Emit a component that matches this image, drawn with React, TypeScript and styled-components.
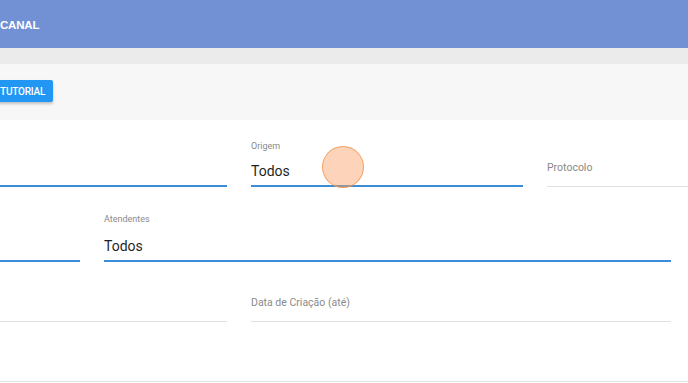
import styled, {createGlobalStyle} from 'styled-components';

const GlobalStyle = createGlobalStyle`
  html, body {
    margin: 0;
    padding: 0;
    background: #ffffff;
    overflow: hidden;
  }
  body {
    font-family: Roboto, "Liberation Sans", Arial, sans-serif;
  }
`;

const Page = styled.div`
  position: relative;
  width: 688px;
  height: 383px;
  overflow: hidden;
  background: #ffffff;
`;

const Header = styled.header`
  height: 48px;
  background: #7290d4;
  display: flex;
  align-items: center;
  padding-top: 1px;
  box-sizing: border-box;
`;

const Title = styled.h1`
  margin: 0;
  color: #ffffff;
  font-size: 11.5px;
  font-weight: 700;
  letter-spacing: -0.2px;
  font-family: "Liberation Sans", Arial, sans-serif;
`;

const Band = styled.div`
  height: 16px;
  background: #ebebeb;
`;

const Toolbar = styled.div`
  height: 56px;
  background: #f7f7f7;
  display: flex;
  align-items: flex-start;
  padding-top: 16px;
  box-sizing: border-box;
`;

const Button = styled.button`
  height: 22px;
  margin-left: -20px;
  padding: 0 8px 0 20px;
  border: none;
  border-radius: 2px;
  background: #2196f3;
  color: #ffffff;
  font-family: Roboto, "Liberation Sans", Arial, sans-serif;
  font-size: 10px;
  font-weight: 500;
  letter-spacing: -0.2px;
  box-shadow: 0 2px 3px rgba(0, 0, 0, 0.22);
`;

const Form = styled.div`
  display: flex;
  flex-direction: column;
  margin-left: -200px;
  border-bottom: 1px solid #e2e2e2;
  height: 262px;
  box-sizing: border-box;
`;

const Row = styled.div<{$top: number; $h: number}>`
  display: flex;
  align-items: flex-end;
  gap: 24px;
  margin-top: ${p => p.$top}px;
  height: ${p => p.$h}px;
`;

const Field = styled.div<{$w: number; $focused?: boolean}>`
  flex: 0 0 ${p => p.$w}px;
  display: flex;
  flex-direction: column;
  box-sizing: border-box;
  border-bottom: ${p => (p.$focused ? '2px solid #3a8dd6' : '1px solid #e0e0e0')};
  padding-bottom: ${p => (p.$focused ? 4 : 8)}px;
`;

const Label = styled.span<{$gap: number}>`
  font-size: 9px;
  line-height: 12px;
  color: #8a8a8a;
  margin-bottom: ${p => p.$gap}px;
`;

const Value = styled.span`
  font-size: 14px;
  line-height: 20px;
  color: #1f1f1f;
`;

const Placeholder = styled.span`
  font-size: 10.5px;
  line-height: 20px;
  color: #8a8a8a;
`;

const Touch = styled.div`
  position: absolute;
  left: 322px;
  top: 146px;
  width: 42px;
  height: 42px;
  box-sizing: border-box;
  border-radius: 50%;
  background: rgba(251, 160, 100, 0.45);
  border: 1.5px solid rgba(243, 150, 80, 0.85);
`;

export default function App() {
  return (
    <>
      <GlobalStyle />
      <Page>
        <Header>
          <Title>CANAL</Title>
        </Header>
        <Band />
        <Toolbar>
          <Button>TUTORIAL</Button>
        </Toolbar>
        <Form>
          <Row $top={20} $h={47}>
            <Field $w={427} $focused>
              <Value>&nbsp;</Value>
            </Field>
            <Field $w={272} $focused>
              <Label $gap={9}>Origem</Label>
              <Value>Todos</Value>
            </Field>
            <Field $w={200}>
              <Placeholder>Protocolo</Placeholder>
            </Field>
          </Row>
          <Row $top={26} $h={49}>
            <Field $w={280} $focused>
              <Value>&nbsp;</Value>
            </Field>
            <Field $w={567} $focused>
              <Label $gap={11}>Atendentes</Label>
              <Value>Todos</Value>
            </Field>
          </Row>
          <Row $top={13} $h={47}>
            <Field $w={427}>
              <Placeholder>&nbsp;</Placeholder>
            </Field>
            <Field $w={420}>
              <Placeholder>Data de Criação (até)</Placeholder>
            </Field>
          </Row>
        </Form>
        <Touch />
      </Page>
    </>
  );
}
